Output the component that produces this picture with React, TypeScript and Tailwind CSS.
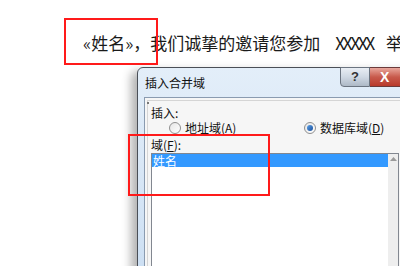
import React from 'react';

const cjk = '"Noto Sans CJK SC", "Noto Sans", sans-serif';

const Radio: React.FC<{ checked?: boolean }> = ({ checked }) => (
    <span className="w-[12px] h-[12px] rounded-full border border-[#8f8f8f] bg-gradient-to-br from-[#e6e6e6] to-[#ffffff] flex items-center justify-center">
        {checked && <span className="w-[6px] h-[6px] rounded-full bg-gradient-to-br from-[#5aa0e6] to-[#1c4f9c]"></span>}
    </span>
);

const App: React.FC = () => {
    return (
        <div className="relative w-[400px] h-[266px] overflow-hidden bg-white" style={{ fontFamily: cjk }}>
            {/* document line */}
            <div className="pt-[32px] pl-[83px] whitespace-nowrap text-[17px] leading-[22px] text-[#1a1a1a]">
                «姓名»，我们诚挚的邀请您参加<span className="ml-[15px] mr-[13px] tracking-[-2.2px]">XXXXX</span>举办
            </div>

            {/* dialog window */}
            <div className="absolute left-[137px] top-[67px] w-[300px] h-[240px] rounded-t-[6px] border border-[#4a4f57] bg-gradient-to-b from-[#e3eef9] to-[#c9ddf2] shadow-[-6px_4px_10px_rgba(0,0,0,0.3)]">
                <div className="relative h-[29px] flex items-center pl-[7px] text-[12px] text-[#111]">
                    插入合并域
                    <div className="absolute left-[202px] top-[-1px] flex">
                        <div className="w-[30px] h-[20px] rounded-bl-[4px] border border-[#6b7480] bg-gradient-to-b from-[#e9eef4] via-[#cfd8e3] to-[#aeb9c6] flex items-center justify-center text-[13px] font-bold text-[#333]" style={{ fontFamily: '"Liberation Sans", sans-serif' }}>?</div>
                        <div className="w-[50px] h-[20px] border border-l-0 border-[#6b3a3a] bg-gradient-to-b from-[#e8a69c] via-[#c85a4c] to-[#b8392b] flex items-center pl-[10px] text-[14px] font-bold text-white" style={{ fontFamily: '"Liberation Sans", sans-serif' }}>X</div>
                    </div>
                </div>
                <div className="ml-[6px] h-[220px] border border-[#8a9bb0] bg-[#f6f6f6] text-[12px] text-[#111]">
                    <div className="relative ml-[2px] mt-[2px] h-[200px] border-t border-l border-[#d5d5d5] pl-[3px] pt-[5px]">
                        <div className="absolute left-[-1px] top-[1px] w-[2px] h-[2px] bg-[#777]"></div>
                        <div className="leading-[14px]">插入:</div>
                        <div className="flex items-center h-[16px]">
                            <div className="flex items-center gap-[4px] ml-[18px] w-[135px]">
                                <Radio />
                                <span>地址域(<u>A</u>)</span>
                            </div>
                            <div className="flex items-center gap-[4px]">
                                <Radio checked />
                                <span>数据库域(<u>D</u>)</span>
                            </div>
                        </div>
                        <div className="mt-[2px] leading-[14px]">域(<u>F</u>):</div>
                        <div className="mt-[1px] w-[248px] h-[120px] border border-[#828790] bg-white flex">
                            <div className="flex-1">
                                <div className="h-[13px] bg-[#3399ff] text-white leading-[13px] pl-[1px]">姓名</div>
                            </div>
                            <div className="w-[10px] bg-[#eeeeee] flex justify-center pt-[3px]">
                                <svg width="7" height="4" viewBox="0 0 7 4"><path d="M0 4 L3.5 0 L7 4 Z" fill="#9a9a9a" /></svg>
                            </div>
                        </div>
                    </div>
                </div>
            </div>

            {/* red annotation boxes */}
            <div className="absolute left-[64px] top-[18px] w-[94px] h-[47px] border-2 border-[#ff1a1a]"></div>
            <div className="absolute left-[128px] top-[134px] w-[142px] h-[62px] border-2 border-[#ff1a1a]"></div>
        </div>
    );
};

export default App;
